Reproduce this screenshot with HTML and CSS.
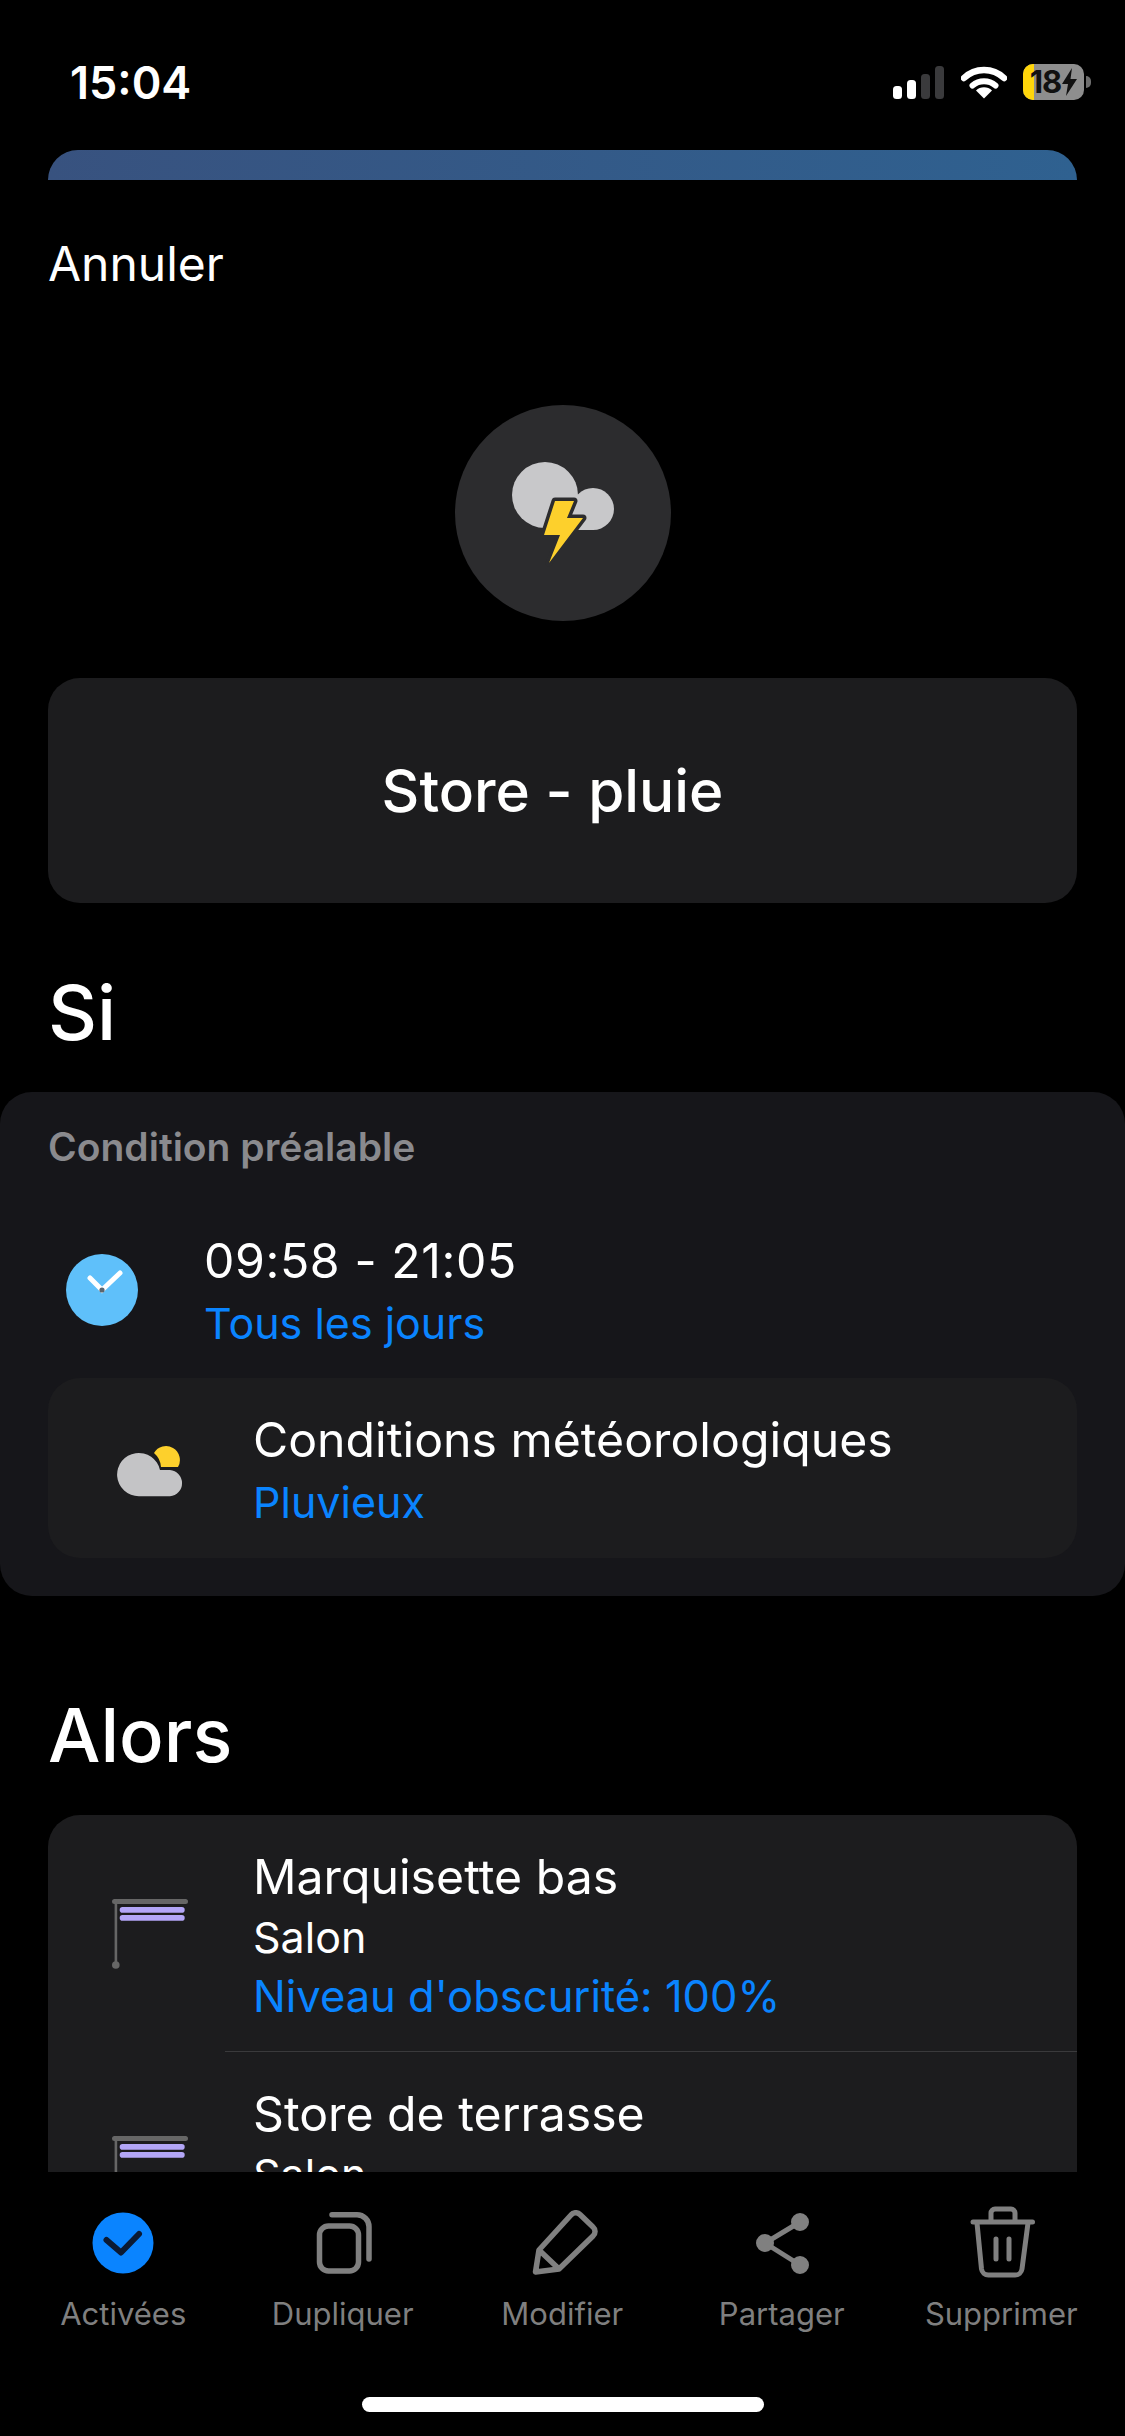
FILE: index.html
```html
<!DOCTYPE html>
<html lang="fr">
<head>
  <title>Store - pluie</title>
  <link rel="stylesheet" href="styles.css">
</head>
<body>

<main class="screen">
  <div class="status-bar">
    <span class="clock-text">15:04</span>
    <div class="status-icons">
      <svg class="signal" width="52" height="33" viewBox="0 0 52 33">
        <rect x="0" y="20" width="9" height="13" rx="3.5" fill="#fff"/>
        <rect x="14" y="14" width="9" height="19" rx="3.5" fill="#fff"/>
        <rect x="28" y="8" width="9" height="25" rx="3.5" fill="#3a3a3c"/>
        <rect x="42" y="0" width="9" height="33" rx="3.5" fill="#3a3a3c"/>
      </svg>
      <svg class="wifi" width="46" height="34" viewBox="0 0 46 34">
        <path d="M3 13 A29 29 0 0 1 43 13" fill="none" stroke="#fff" stroke-width="6.5" stroke-linecap="round"/>
        <path d="M11.5 20.5 A18 18 0 0 1 34.5 20.5" fill="none" stroke="#fff" stroke-width="6" stroke-linecap="round"/>
        <path d="M23 33.5 L15 25.5 A11.5 11.5 0 0 1 31 25.5 Z" fill="#fff"/>
      </svg>
      <div class="battery">
        <div class="battery-body">
          <span class="battery-fill"></span>
          <span class="battery-text">18</span>
          <svg class="battery-bolt" width="15" height="28" viewBox="0 0 15 28">
            <path d="M10 0 L0 16 H6 L4 28 L15 11 H8.5 Z" fill="#111"/>
          </svg>
        </div>
        <span class="battery-nub"></span>
      </div>
    </div>
  </div>

  <div class="peek-bar"></div>

  <div class="cancel">Annuler</div>

  <div class="scene-icon">
    <svg width="216" height="216" viewBox="0 0 216 216">
      <circle cx="90" cy="90" r="33" fill="#c8c8ca"/>
      <circle cx="138" cy="104" r="21" fill="#c8c8ca"/>
      <rect x="90" y="90" width="48" height="35" fill="#c8c8ca"/>
      <path d="M100 96 H119 L112 113 H128 L94 158 L105 130 H89 Z" fill="#fdd02c" stroke="#2c2c2e" stroke-width="7" stroke-linejoin="round" paint-order="stroke"/>
    </svg>
  </div>

  <div class="name-card">Store - pluie</div>

  <h2 class="section-title si">Si</h2>

  <section class="panel">
    <div class="panel-label">Condition préalable</div>
    <div class="time-row">
      <svg class="clock-icon" width="72" height="72" viewBox="0 0 72 72">
        <circle cx="36" cy="36" r="36" fill="#5fc0fa"/>
        <path d="M24 24 L36 36 L54 19" fill="none" stroke="#fff" stroke-width="5" stroke-linecap="round"/>
        <circle cx="36" cy="36" r="2.6" fill="#5a6670"/>
      </svg>
      <div>
        <div class="line time">09:58 - 21:05</div>
        <div class="line sub blue">Tous les jours</div>
      </div>
    </div>
    <div class="weather-card">
      <svg class="weather-icon" width="66" height="52" viewBox="0 0 66 52">
        <path d="M37 8 A12.5 12.5 0 0 1 61 22 H44 A20 20 0 0 0 37 8 Z" fill="#fdd02c"/>
        <path d="M22 51.3 H53 A13.2 13.2 0 0 0 53 25 H43 A21.7 21.7 0 1 0 22 51.3 Z" fill="#c4c4c6"/>
      </svg>
      <div>
        <div class="line">Conditions météorologiques</div>
        <div class="line sub blue">Pluvieux</div>
      </div>
    </div>
  </section>

  <h2 class="section-title alors">Alors</h2>

  <section class="actions">
    <div class="action">
      <svg class="blind-icon" width="76" height="70" viewBox="0 0 76 70">
        <rect x="0" y="0" width="76" height="5" rx="2.5" fill="#666"/>
        <rect x="2.6" y="0" width="2.6" height="66" fill="#666"/>
        <circle cx="3.8" cy="66" r="3.8" fill="#666"/>
        <rect x="7.7" y="8" width="65" height="5.7" rx="2.8" fill="#b3a6f7"/>
        <rect x="7.7" y="16" width="65" height="5.7" rx="2.8" fill="#b3a6f7"/>
      </svg>
      <div class="action-text">
        <div class="line">Marquisette bas</div>
        <div class="line sub">Salon</div>
        <div class="line level blue">Niveau d'obscurité: 100%</div>
      </div>
    </div>
    <div class="divider"></div>
    <div class="action">
      <svg class="blind-icon" width="76" height="70" viewBox="0 0 76 70">
        <rect x="0" y="0" width="76" height="5" rx="2.5" fill="#666"/>
        <rect x="2.6" y="0" width="2.6" height="66" fill="#666"/>
        <circle cx="3.8" cy="66" r="3.8" fill="#666"/>
        <rect x="7.7" y="8" width="65" height="5.7" rx="2.8" fill="#b3a6f7"/>
        <rect x="7.7" y="16" width="65" height="5.7" rx="2.8" fill="#b3a6f7"/>
      </svg>
      <div class="action-text">
        <div class="line">Store de terrasse</div>
        <div class="line sub">Salon</div>
      </div>
    </div>
  </section>
</main>

<footer class="tabs-area">
  <nav class="tabs">
    <div class="tab">
      <div class="tab-icon">
        <svg width="62" height="62" viewBox="0 0 62 62">
          <circle cx="31" cy="31" r="30.5" fill="#0a84ff"/>
          <path d="M14.5 28 L29 40.5 L47 22" fill="none" stroke="#0b1a33" stroke-width="6" stroke-linecap="round" stroke-linejoin="round"/>
        </svg>
      </div>
      <span class="tab-label">Activées</span>
    </div>
    <div class="tab">
      <div class="tab-icon">
        <svg width="66" height="62" viewBox="-6 0 66 62" fill="none" stroke="#808080" stroke-width="5.5" stroke-linecap="round">
          <rect x="3.5" y="14" width="39" height="45" rx="9"/>
          <path d="M16 2.8 H41 A12 12 0 0 1 53 14.8 V47"/>
        </svg>
      </div>
      <span class="tab-label">Dupliquer</span>
    </div>
    <div class="tab">
      <div class="tab-icon">
        <svg width="76" height="66" viewBox="-6 0 76 66" fill="none" stroke="#808080" stroke-width="5.5" stroke-linejoin="round">
          <path d="M5.5 62 L9 40 L41 5 A6 6 0 0 1 50 4.5 L63 17 A6 6 0 0 1 63 26 L29 59 Z M9 40 L29 59"/>
        </svg>
      </div>
      <span class="tab-label">Modifier</span>
    </div>
    <div class="tab">
      <div class="tab-icon">
        <svg width="58" height="64" viewBox="-2 0 58 64" fill="#808080" stroke="#808080" stroke-width="5">
          <path d="M45 11 L10 32 L45 54" fill="none"/>
          <circle cx="45" cy="11" r="6.5"/>
          <circle cx="10" cy="32" r="6.5"/>
          <circle cx="45" cy="54" r="6.5"/>
        </svg>
      </div>
      <span class="tab-label">Partager</span>
    </div>
    <div class="tab">
      <div class="tab-icon">
        <svg width="80" height="76" viewBox="-4 0 80 76" fill="none" stroke="#808080" stroke-width="5" stroke-linecap="round">
          <path d="M8 17 H67.5"/>
          <path d="M26 16 V8 A4 4 0 0 1 30 4 H46 A4 4 0 0 1 50 8 V16"/>
          <path d="M12 18 L16.5 64 A7 7 0 0 0 23.5 70 H50 A7 7 0 0 0 57 64 L63 18"/>
          <path d="M31 34 V54 M44 34 V54"/>
        </svg>
      </div>
      <span class="tab-label">Supprimer</span>
    </div>
  </nav>
  <div class="home-indicator"></div>
</footer>

</body>
</html>
```

FILE: styles.css
```css
html, body {
  margin: 0;
  padding: 0;
  background: #000;
}
body {
  width: 1125px;
  height: 2436px;
  overflow: hidden;
  color: #fff;
  font-family: Inter, "Noto Sans", sans-serif;
}
.screen {
  height: 2172px;
  overflow: hidden;
}

/* status bar */
.status-bar {
  height: 150px;
  box-sizing: border-box;
  padding: 58px 34px 0 70px;
  display: flex;
  justify-content: space-between;
  align-items: flex-start;
}
.clock-text {
  font-size: 45px;
  font-weight: 600;
  line-height: 50px;
  width: 120px;
}
.status-icons {
  display: flex;
  align-items: center;
  gap: 16px;
  margin-top: 6px;
}
.battery {
  display: flex;
  align-items: center;
  gap: 2px;
}
.battery-body {
  position: relative;
  width: 61px;
  height: 36px;
  border-radius: 10px;
  background: #8e8e8e;
  overflow: hidden;
  display: flex;
  align-items: center;
  justify-content: center;
  gap: 1px;
}
.battery-fill {
  position: absolute;
  left: 0;
  top: 0;
  bottom: 0;
  width: 11px;
  background: #ffd60a;
}
.battery-text {
  position: relative;
  font-size: 31px;
  font-weight: 700;
  color: #111;
  line-height: 36px;
  letter-spacing: -1px;
}
.battery-bolt {
  position: relative;
}
.battery-nub {
  width: 5px;
  height: 12px;
  background: #6e6e6e;
  border-radius: 0 6px 6px 0;
}

.peek-bar {
  height: 30px;
  margin: 0 48px;
  border-radius: 30px 30px 0 0;
  background: linear-gradient(90deg, #38527f, #2f6190);
}

.cancel {
  height: 225px;
  box-sizing: border-box;
  padding: 56px 0 0 48px;
  font-size: 48px;
  line-height: 56px;
}
.scene-icon {
  width: 216px;
  height: 216px;
  margin: 0 auto;
  border-radius: 50%;
  background: #2c2c2e;
}
.scene-icon svg {
  display: block;
}
.name-card {
  height: 225px;
  margin: 57px 48px 0;
  border-radius: 32px;
  background: #1c1c1e;
  display: flex;
  align-items: center;
  justify-content: center;
  padding-right: 20px;
  font-size: 58.5px;
  font-weight: 500;
}

.section-title {
  margin: 0;
  padding-left: 48px;
  font-size: 76px;
  font-weight: 500;
  line-height: 90px;
}
.section-title.si {
  height: 189px;
  box-sizing: border-box;
  padding-top: 64px;
}
.section-title.alors {
  height: 219px;
  box-sizing: border-box;
  padding-top: 94px;
  font-size: 74px;
}

.panel {
  height: 504px;
  box-sizing: border-box;
  padding-top: 36px;
  border-radius: 32px;
  background: #16161a;
}
.panel-label {
  padding-left: 48px;
  font-size: 39px;
  font-weight: 600;
  line-height: 38px;
  color: #8a8a8e;
}
.line {
  font-size: 48.2px;
  line-height: 61px;
}
.line.time {
  letter-spacing: 0.6px;
}
.line.sub {
  font-size: 43px;
}
.line.level {
  font-size: 43.5px;
  line-height: 56px;
}
.line.blue {
  color: #0a84ff;
}
.time-row .sub, .weather-card .sub {
  margin-top: 2px;
}
.time-row {
  display: flex;
  align-items: center;
  gap: 66px;
  padding: 64px 0 24px 66px;
}
.clock-icon {
  margin-bottom: 4px;
}
.weather-card {
  height: 180px;
  box-sizing: border-box;
  margin: 0 48px;
  padding: 5px 0 0 69px;
  border-radius: 32px;
  background: #1c1c1e;
  display: flex;
  align-items: center;
  gap: 70px;
}

.actions {
  margin: 0 48px;
  border-radius: 32px 32px 0 0;
  background: #1c1c1e;
  height: 400px;
}
.action {
  display: flex;
  align-items: flex-start;
  padding-left: 64px;
}
.blind-icon {
  margin-top: 84px;
  flex-shrink: 0;
}
.action-text {
  padding: 31px 0 27px 65px;
}
.divider {
  height: 1px;
  margin-left: 177px;
  background: #3a3a3c;
}

/* bottom actions */
.tabs-area {
  height: 264px;
  background: #000;
}
.tabs {
  display: grid;
  grid-template-columns: repeat(5, 219.5px);
  padding: 33px 0 0 13.5px;
}
.tab {
  display: flex;
  flex-direction: column;
  align-items: center;
  gap: 13px;
}
.tab-icon {
  height: 76px;
  display: flex;
  align-items: center;
  justify-content: center;
}
.tab-label {
  font-size: 31px;
  line-height: 40px;
  color: #7f7f7f;
}
.home-indicator {
  width: 402px;
  height: 15px;
  margin: 63px 0 0 362px;
  border-radius: 8px;
  background: #fff;
}
```
